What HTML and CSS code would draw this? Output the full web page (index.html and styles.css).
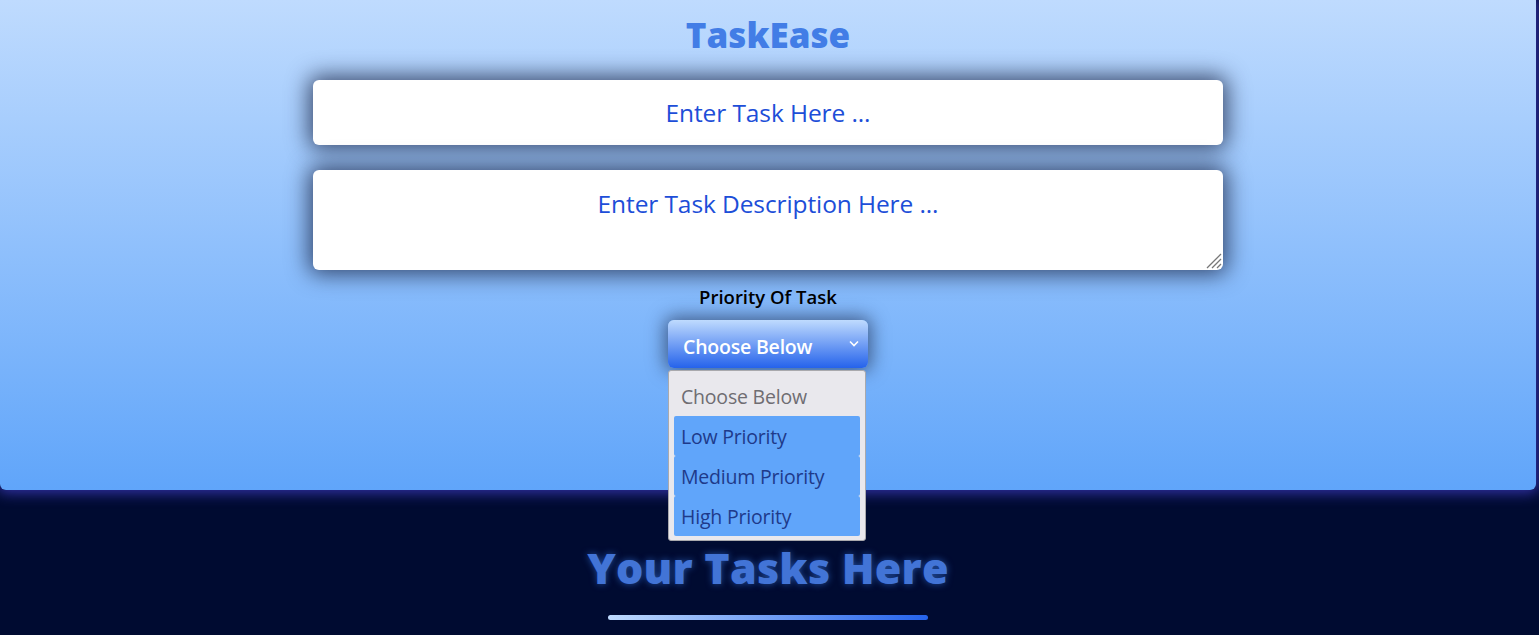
FILE: index.html
```html
<!DOCTYPE html>
<html>
<head>
<meta charset="utf-8">
<link rel="stylesheet" href="styles.css">
</head>
<body>
<section class="top">
  <h1 class="title">TaskEase</h1>
  <div class="field input-field"><span class="ph">Enter Task Here ...</span></div>
  <div class="field area-field"><span class="ph">Enter Task Description Here ...</span>
    <svg class="grip" width="18" height="18" viewBox="0 0 18 18"><path d="M17 3 L3 17 M17 8 L8 17 M17 13 L13 17" stroke="#777" stroke-width="1.3" fill="none"/></svg>
  </div>
  <div class="label">Priority Of Task</div>
  <div class="select-wrap">
    <div class="select">
      <span>Choose Below</span>
      <svg class="chev" width="10" height="7" viewBox="0 0 10 7"><path d="M1 1.5 L5 5.5 L9 1.5" stroke="#fff" stroke-width="1.6" fill="none"/></svg>
    </div>
    <ul class="menu">
      <li class="opt first">Choose Below</li>
      <li class="opt sel">Low Priority</li>
      <li class="opt sel">Medium Priority</li>
      <li class="opt sel">High Priority</li>
    </ul>
  </div>
</section>
<section class="tasks">
  <h2 class="tasks-title">Your Tasks Here</h2>
  <div class="bar"></div>
</section>
</body>
</html>
```
FILE: styles.css
```css
html, body { margin: 0; padding: 0; }
body {
  background: #000b31;
  font-family: "Open Sans", "Noto Sans", sans-serif;
  height: 635px;
  overflow: hidden;
}
.top {
  width: 1536px;
  height: 490px;
  box-sizing: border-box;
  background: linear-gradient(180deg, #bfdbfe 0%, #60a5fa 100%);
  border-radius: 0 0 6px 6px;
  box-shadow: 0 0 14px 3px #3333a8;
  display: flex;
  flex-direction: column;
  align-items: center;
  position: relative;
  z-index: 1;
}
.title {
  margin: 12px 0 0;
  height: 46px;
  font-size: 35px;
  font-weight: 800;
  line-height: 46px;
  color: #427de6;
}
.field {
  width: 910px;
  background: #fff;
  border-radius: 6px;
  box-shadow: 0 0 22px 4px rgba(20, 30, 60, 0.75);
  display: flex;
  justify-content: center;
  position: relative;
  box-sizing: border-box;
}
.input-field {
  margin-top: 22px;
  height: 65px;
  align-items: center;
}
.area-field {
  margin-top: 25px;
  height: 100px;
  padding-top: 18px;
}
.ph {
  color: #1d4ed8;
  font-size: 24.5px;
  line-height: 32px;
  letter-spacing: -0.1px;
}
.grip { position: absolute; right: 1px; bottom: 1px; }
.label {
  margin-top: 15px;
  font-size: 18.5px;
  font-weight: 600;
  line-height: 24px;
  color: #000;
  letter-spacing: 0;
}
.select-wrap {
  margin-top: 11px;
  position: relative;
  width: 200px;
}
.select {
  height: 48px;
  border-radius: 6px;
  background: linear-gradient(180deg, #bfdbfe 0%, #2563eb 100%);
  box-shadow: 0 0 18px 3px rgba(20, 30, 60, 0.6);
  display: flex;
  align-items: center;
  justify-content: space-between;
  padding: 4px 9px 0 15px;
  box-sizing: border-box;
  color: #fff;
  font-size: 19.5px;
  font-weight: 600;
  letter-spacing: -0.2px;
}
.chev { margin-bottom: 5px; }
.menu {
  position: absolute;
  top: 50px;
  left: 0;
  width: 198px;
  box-sizing: border-box;
  margin: 0;
  padding: 5px 5px 4px;
  list-style: none;
  background: #e9e8ed;
  border: 1px solid #a9a9ad;
  border-radius: 3px;
  z-index: 5;
}
.opt {
  height: 40px;
  line-height: 42px;
  padding-left: 7px;
  font-size: 19.5px;
  font-weight: 500;
  letter-spacing: -0.2px;
}
.first { color: #6f6d72; }
.sel {
  background: #60a5fa;
  color: #1e3a8a;
  border-radius: 2px;
}
.tasks {
  width: 1536px;
  display: flex;
  flex-direction: column;
  align-items: center;
}
.tasks-title {
  margin: 48px 0 0;
  height: 60px;
  line-height: 60px;
  font-size: 43px;
  font-weight: 800;
  color: #4274d6;
  text-shadow: 0 0 7px rgba(59, 130, 246, 0.55);
  letter-spacing: 0.2px;
}
.bar {
  margin-top: 17px;
  width: 320px;
  height: 5px;
  border-radius: 3px;
  background: linear-gradient(90deg, #bfdbfe, #2563eb);
}
```
